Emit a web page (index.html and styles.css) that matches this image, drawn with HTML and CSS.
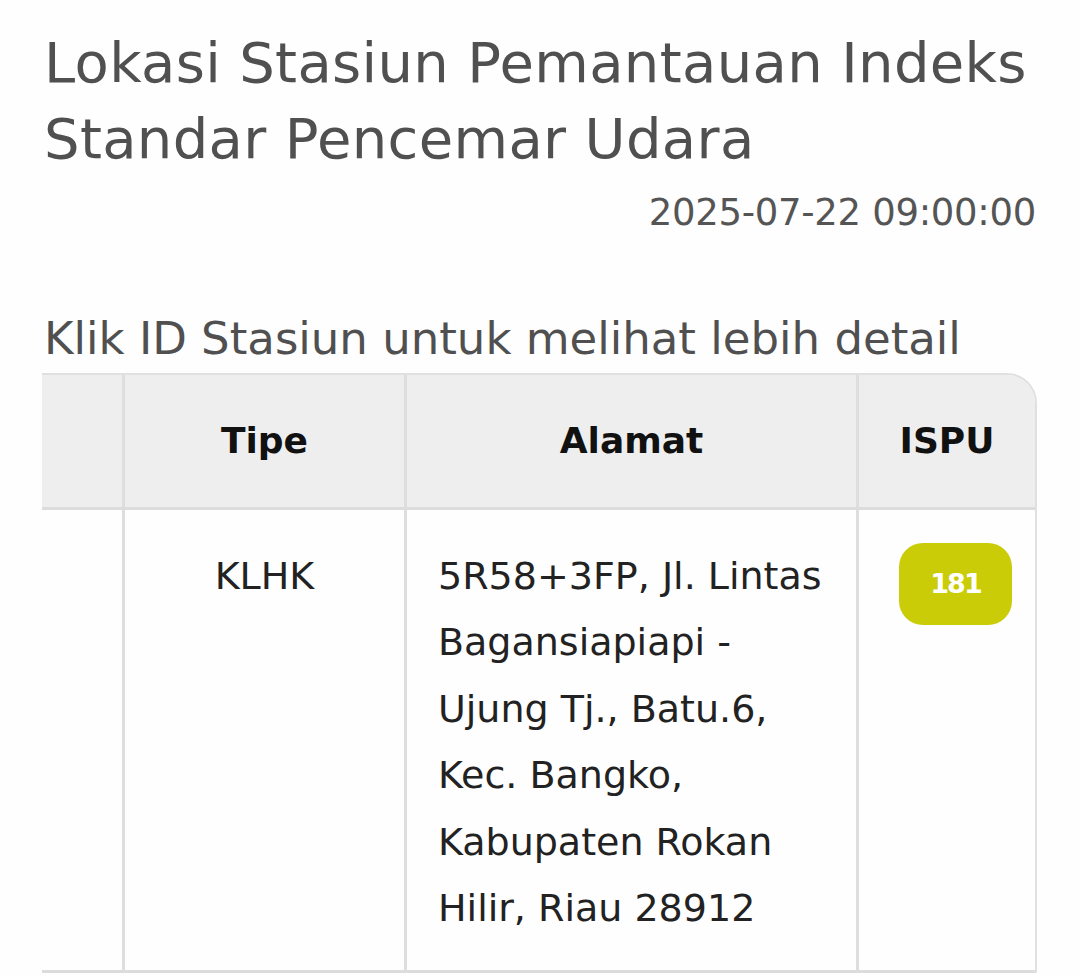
FILE: index.html
```html
<!DOCTYPE html>
<html lang="id">
<head>
<meta charset="utf-8">
<title>Lokasi Stasiun Pemantauan ISPU</title>
<link rel="stylesheet" href="styles.css">
</head>
<body>
<main class="page">
  <h1 class="title">Lokasi Stasiun Pemantauan Indeks Standar Pencemar Udara</h1>
  <div class="timestamp">2025-07-22 09:00:00</div>
  <p class="hint">Klik ID Stasiun untuk melihat lebih detail</p>
  <div class="table-wrap">
    <table class="stations">
      <thead>
        <tr>
          <th class="col-id"></th>
          <th class="col-type">Tipe</th>
          <th class="col-addr">Alamat</th>
          <th class="col-ispu">ISPU</th>
        </tr>
      </thead>
      <tbody>
        <tr>
          <td class="col-id"></td>
          <td class="col-type">KLHK</td>
          <td class="col-addr">5R58+3FP, Jl. Lintas Bagansiapiapi - Ujung Tj., Batu.6, Kec. Bangko, Kabupaten Rokan Hilir, Riau 28912</td>
          <td class="col-ispu"><span class="badge">181</span></td>
        </tr>
      </tbody>
    </table>
  </div>
</main>
</body>
</html>
```
FILE: styles.css
```css
html, body {
  margin: 0;
  padding: 0;
  background: #fefefe;
}
body {
  font-family: "DejaVu Sans", "Noto Sans", sans-serif;
  color: #505050;
}
.page {
  padding: 25px 44px 0 44px;
  display: flex;
  flex-direction: column;
}
.title {
  margin: 0;
  font-size: 56px;
  line-height: 76px;
  font-weight: normal;
  color: #505050;
  letter-spacing: 0.35px;
}
.timestamp {
  margin-top: 11px;
  align-self: flex-end;
  font-size: 37px;
  line-height: 50px;
  color: #555555;
  letter-spacing: -0.3px;
  margin-right: -1px;
}
.hint {
  margin: 73px 0 0 0;
  font-size: 45px;
  line-height: 56px;
  color: #505050;
}
.table-wrap {
  margin-top: 6px;
  margin-left: -2px;
  width: 995px;
  border-top: 2px solid #e0e0e0;
  border-right: 2px solid #e0e0e0;
  border-top-right-radius: 30px;
  overflow: hidden;
  box-sizing: border-box;
}
.stations {
  width: 100%;
  border-collapse: collapse;
  table-layout: fixed;
}
.stations th,
.stations td {
  border-left: 3px solid #dedede;
  padding: 0;
}
.stations th:first-child,
.stations td:first-child {
  border-left: none;
}
.stations thead tr {
  background: #eeeeee;
  height: 133px;
}
.stations th {
  font-size: 36px;
  line-height: 44px;
  font-weight: bold;
  color: #111111;
  text-align: center;
  vertical-align: middle;
  border-bottom: 3px solid #dcdcdc;
}
.stations td {
  vertical-align: top;
  font-size: 38px;
  line-height: 66.5px;
  color: #222222;
  border-bottom: 3px solid #dcdcdc;
}
.col-id { width: 80px; }
.col-type { width: 279px; }
.col-addr { width: 449px; }
.col-ispu { width: auto; }
td.col-type {
  text-align: center;
  padding: 33px 0 28px 0;
}
td.col-addr {
  padding: 33px 24px 28px 31px;
}
td.col-ispu {
  padding: 33px 0 0 40px;
}
.badge {
  display: inline-flex;
  align-items: center;
  justify-content: center;
  width: 113px;
  height: 82px;
  border-radius: 24px;
  background: #c9cc06;
  color: #ffffff;
  font-size: 27px;
  font-weight: bold;
  letter-spacing: -2px;
  line-height: 1;
}
```
